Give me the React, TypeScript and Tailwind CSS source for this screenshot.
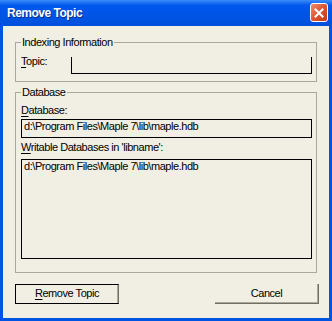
import React from 'react';

const font = "font-['Liberation_Sans',Arial,sans-serif]";

const GroupBox = ({ title, className, children }: { title: string; className: string; children: React.ReactNode }) => (
  <div className={`relative border border-[#ACA899] ${className}`}>
    <span className="absolute left-[5px] top-[-7px] bg-[#F1EFE3] pl-[1px] pr-[1px] text-[11px] leading-[13px] tracking-[-0.45px] text-black">
      {title}
    </span>
    {children}
  </div>
);

const App = () => {
  return (
    <div className={`flex h-[321px] w-[332px] flex-col bg-[#0054E3] ${font}`}>
      {/* title bar */}
      <div className="flex h-[26px] items-start justify-between bg-gradient-to-b from-[#3A8CF8] via-[#0058EE] via-[20%] to-[#0050DC] pl-[7px] pr-[4px]">
        <span className="mt-[6px] text-[12px] font-bold leading-[14px] tracking-[-0.5px] text-white [text-shadow:1px_1px_#0A2C8C]">
          Remove Topic
        </span>
        <div className="mt-[3px] flex h-[19px] w-[18px] items-center justify-center rounded-[3px] border border-white bg-gradient-to-br from-[#EE8A6C] via-[#E0532E] to-[#C23A14]">
          <svg width="10" height="10" viewBox="0 0 10 10">
            <path d="M1.5 1.5 L8.5 8.5 M8.5 1.5 L1.5 8.5" stroke="white" strokeWidth="2" strokeLinecap="square" />
          </svg>
        </div>
      </div>

      {/* client area */}
      <div className="mx-[3px] mb-[3px] flex flex-1 flex-col bg-[#F1EFE3] pt-[16px] text-[11px] leading-[13px] tracking-[-0.45px] text-black">
        <GroupBox title="Indexing Information" className="mx-[12px] pb-[7px] pl-[5px] pr-[4px] pt-[12px]">
          <div className="flex items-start">
            <span className="w-[50px]">
              <span className="underline underline-offset-[2px]">T</span>opic:
            </span>
            <div className="mt-[2px] h-[17px] flex-1 border-b border-l border-r border-black" />
          </div>
        </GroupBox>

        <GroupBox title="Database" className="mx-[12px] mt-[10px] flex flex-col pb-[13px] pl-[5px] pr-[4px] pt-[11px]">
          <span>
            <span className="underline underline-offset-[2px]">D</span>atabase:
          </span>
          <div className="mt-[2px] h-[19px] border border-black pl-[2px]">
            d:\Program Files\Maple 7\lib\maple.hdb
          </div>
          <span className="mt-[3px]">
            <span className="underline underline-offset-[2px]">W</span>ritable Databases in 'libname':
          </span>
          <div className="mt-[5px] h-[100px] border border-black pl-[2px]">
            d:\Program Files\Maple 7\lib\maple.hdb
          </div>
        </GroupBox>

        <div className="mt-[11px] flex justify-between pl-[12px] pr-[10px]">
          <button className="flex h-[20px] w-[104px] items-center justify-center border border-black border-r-[#716F64] pb-[1px] shadow-[inset_-1px_0_#ACA899]">
            <span>
              <span className="underline underline-offset-[2px]">R</span>emove Topic
            </span>
          </button>
          <button className="flex h-[20px] w-[104px] items-center justify-center border-b border-r border-[#716F64] pb-[1px] shadow-[inset_-1px_-1px_#ACA899]">
            Cancel
          </button>
        </div>
      </div>
    </div>
  );
};

export default App;
